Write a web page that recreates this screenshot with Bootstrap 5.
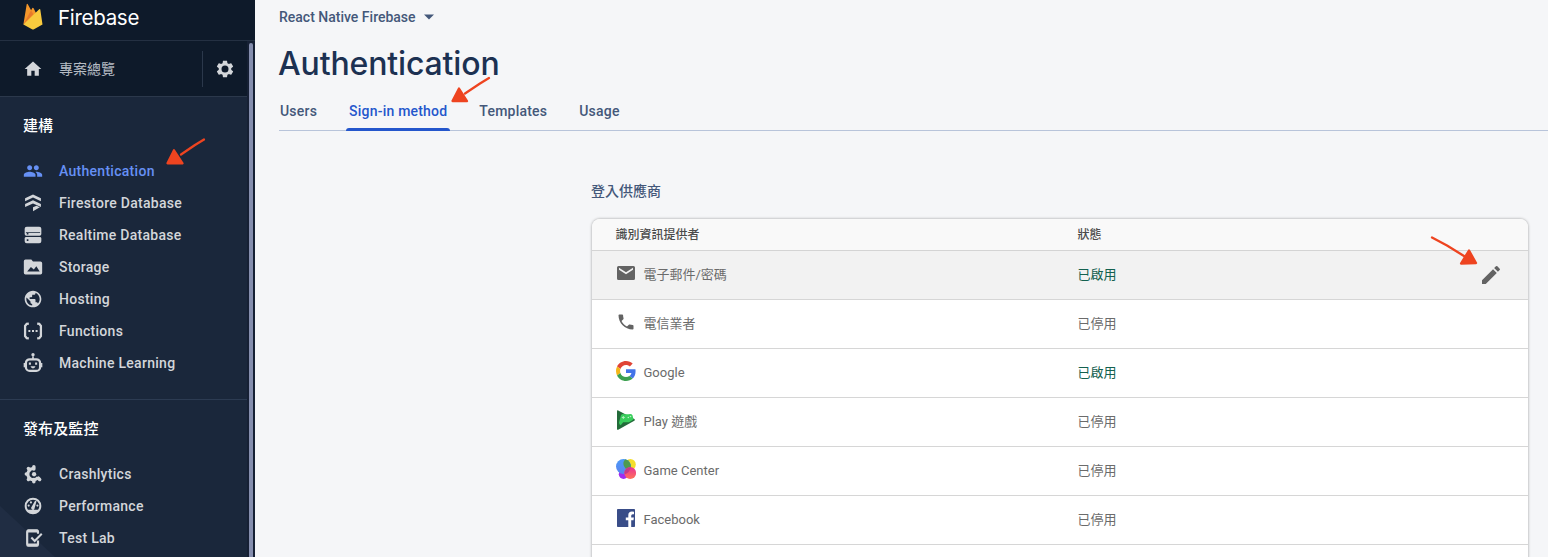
<!DOCTYPE html>
<html lang="zh-Hant">
<head>
<meta charset="utf-8">
<meta name="viewport" content="width=device-width, initial-scale=1">
<title>Authentication - Firebase</title>
<link rel="stylesheet" href="https://cdn.jsdelivr.net/npm/bootstrap@5.3.0/dist/css/bootstrap.min.css">
<style>
body{font-family:Roboto,"Noto Sans CJK TC",sans-serif;font-size:14px;line-height:20px;background:#f5f6f8;color:#3d5077}
.sidebar{width:255px;background:#1a273b;color:#d3d6da}
.brand-bar{height:41px;background:#0e1a2a;border-bottom:1px solid #243042;padding:0 0 7px 23px}
.brand-name{font:400 20.5px/28px Inter,sans-serif;letter-spacing:-.3px;color:#fff;margin:2px 0 0 15px}
.overview{height:56px;width:247px;background:#0e1a2a;border-bottom:1px solid #2b384b;padding-left:23px;color:#b6bcc4}
.overview-gear{height:36px;width:45px;border-left:1px solid #2b384b}
.side-scroll{top:41px;right:0;width:8px;background:#162034}
.side-scroll span{width:4px;margin:2px 2px 0;background:#858eae;border-radius:3px 3px 0 0}
.side-section{width:247px;border-bottom:1px solid #2c3b52;padding:19px 0 20px 23px}
.side-title{font-size:15px;font-weight:500;letter-spacing:.1px;color:#fff;margin-bottom:19px;line-height:20px}
.side-link{height:32px;gap:16px;color:#d3d6da;font-weight:500;letter-spacing:.28px;text-decoration:none}
.side-link.active{color:#6690f4}
.ic{width:20px;height:20px;fill:currentColor;flex:none;display:block}
.corner{left:0;bottom:0}
.page{padding-left:24px}
.project{height:34px;font-weight:500;color:#44587a}
h1.page-title{font:500 32px/40px Inter,sans-serif;letter-spacing:-.15px;color:#1c3152;margin:10px 0 -1px -1px}
.tabs{gap:32px;height:48px;border-bottom:1px solid #b8c4da;padding-left:1px}
.tabs a{height:48px;line-height:57px;font-weight:500;letter-spacing:.21px;color:#44587a;text-decoration:none;position:relative}
.tabs a.active{color:#2456cc}
.tabs a.active::after{content:"";position:absolute;left:-3px;right:-3px;bottom:0;height:3px;background:#2456cc;border-radius:3px 3px 0 0}
.providers{width:936px;margin:50px 0 0 313px}
.providers h2{font-size:14px;line-height:20px;font-weight:500;color:#44587a;margin:0 0 18px -1px}
.provider-card{background:#fff;border-radius:8px 8px 0 0;box-shadow:0 0 3px rgba(0,0,0,.38);font-size:13px;color:#6b6b6b}
.p-head{height:32px;background:#f9f9f9;border-bottom:1px solid #d4d4d4;border-radius:8px 8px 0 0;font-size:12px;font-weight:500;color:#4b4b4b;padding:0 24px 0 23.5px}
.p-row{height:49px;border-bottom:1px solid #d6d6d6;padding:0 25px 0 23.5px}
.p-row.hovered{background:#f2f2f2}
.p-name{width:462px}
.p-row .ic{margin-right:8px;margin-top:-4px;color:#636363}
.p-row .edit{width:24px;height:24px;margin:0 0 0 auto}
.enabled{color:#14614f}
.arrows{left:0;top:0;pointer-events:none}
</style>
</head>
<body>
<div class="d-flex vh-100 overflow-hidden position-relative">
<aside class="sidebar position-relative flex-shrink-0 overflow-hidden">
  <div class="brand-bar d-flex align-items-center">
    <svg width="20" height="27" viewBox="0 0 20 27"><path fill="#f5972b" d="M.4 21.5 3.700 1.300Q4.100.2 4.800 1.200L8.100 7.300 9.300 5Q10 4.200 10.600 5.200L14 12 .4 21.500z"/><path fill="#e7792b" d="M.4 21.500 10.300 11.300 8.100 7.300z"/><path fill="#f8ca3e" d="M.4 21.500 16.200 6.200Q17 5.500 17.300 6.600L19.500 21.500 11 26.200Q10 26.800 9 26.200z"/></svg>
    <span class="brand-name">Firebase</span>
  </div>
  <div class="overview d-flex align-items-center">
    <svg class="ic" style="color:#d3d6da" viewBox="0 0 24 24"><path d="M10 20v-6h4v6h5v-8h3L12 3 2 12h3v8z"/></svg>
    <span class="ms-3 flex-grow-1">專案總覽</span>
    <div class="overview-gear d-flex align-items-center justify-content-center"><svg class="ic" style="color:#d3d6da" viewBox="0 0 24 24"><path fill-rule="evenodd" d="M19.43 12.98c.04-.32.07-.64.07-.98s-.03-.66-.07-.98l2.11-1.65c.19-.15.24-.42.12-.64l-2-3.46c-.12-.22-.39-.3-.61-.22l-2.49 1c-.52-.4-1.08-.73-1.69-.98l-.38-2.65C14.46 2.18 14.25 2 14 2h-4c-.25 0-.46.18-.49.42l-.38 2.65c-.61.25-1.17.59-1.69.98l-2.49-1c-.23-.09-.49 0-.61.22l-2 3.46c-.13.22-.07.49.12.64l2.11 1.65c-.04.32-.07.65-.07.98s.03.66.07.98l-2.11 1.65c-.19.15-.24.42-.12.64l2 3.46c.12.22.39.3.61.22l2.49-1c.52.4 1.08.73 1.69.98l.38 2.65c.03.24.24.42.49.42h4c.25 0 .46-.18.49-.42l.38-2.65c.61-.25 1.17-.59 1.69-.98l2.49 1c.23.09.49 0 .61-.22l2-3.46c.12-.22.07-.49-.12-.64zM12 16.2a4.2 4.2 0 1 1 0-8.4 4.2 4.2 0 0 1 0 8.4z"/></svg></div>
  </div>
  <svg class="corner position-absolute" width="60" height="52" viewBox="0 0 60 52"><path fill="#202d43" d="M0 1 55 52H0z"/></svg>
  <nav class="side-section position-relative">
    <div class="side-title">建構</div>
    <a class="side-link active d-flex align-items-center" href="#"><svg class="ic" viewBox="0 0 24 24"><path d="M16 11c1.66 0 2.99-1.34 2.99-3S17.66 5 16 5s-3 1.34-3 3 1.34 3 3 3zm-8 0c1.66 0 2.99-1.34 2.99-3S9.66 5 8 5 5 6.34 5 8s1.34 3 3 3zm0 2c-2.330 0-7 1.170-7 3.500V19h14v-2.500c0-2.330-4.670-3.500-7-3.500zm8 0c-.29 0-.62.02-.97.05 1.160.84 1.970 1.970 1.970 3.450V19h6v-2.500c0-2.330-4.670-3.500-7-3.500z"/></svg>Authentication</a>
    <a class="side-link d-flex align-items-center" href="#"><svg class="ic" viewBox="0 0 24 24"><path d="M12 1.700 21.500 6.300V10L12 5.500 2.500 10V6.300zM12 8.700l9.500 4.500v3.700L12 12.500 2.500 16.900v-3.700zM12 17.200l4.200-1.900 4 1.900-8.200 4.800z"/></svg>Firestore Database</a>
    <a class="side-link d-flex align-items-center" href="#"><svg class="ic" viewBox="0 0 24 24"><path fill-rule="evenodd" d="M4.500 2h15Q22 2 22 4.500v6.300q0 2-2 2H4q-2 0-2-2V4.500Q2 2 4.500 2zM3.500 8.600v1.100h1v1.800h2V9.700h14V8.600zM4 14.500h16q2 0 2 1.500v3.500q0 2.500-2.500 2.500h-15Q2 22 2 19.500V16q0-1.500 2-1.500zm.5 2.700v2h2v-2z"/></svg>Realtime Database</a>
    <a class="side-link d-flex align-items-center" href="#"><svg class="ic" viewBox="0 0 24 24"><path fill-rule="evenodd" d="M3 3h7l2 2.500h9q2 0 2 2V19q0 2-2 2H3q-2 0-2-2V5q0-2 2-2zm2 14.500h15l-4-6.500-3 4-3.500-3z"/></svg>Storage</a>
    <a class="side-link d-flex align-items-center" href="#"><svg class="ic" viewBox="0 0 24 24"><path d="M12 2C6.480 2 2 6.480 2 12s4.480 10 10 10 10-4.480 10-10S17.520 2 12 2zm-1 17.930c-3.950-.49-7-3.850-7-7.930 0-.62.080-1.210.210-1.790L9 15v1c0 1.100.9 2 2 2v1.930zm6.900-2.540c-.26-.81-1-1.390-1.900-1.390h-1v-3c0-.55-.45-1-1-1H8v-2h2c.55 0 1-.45 1-1V7h2c1.100 0 2-.9 2-2v-.41c2.930 1.190 5 4.060 5 7.410 0 2.080-.8 3.970-2.100 5.390z"/></svg>Hosting</a>
    <a class="side-link d-flex align-items-center" href="#"><svg class="ic" viewBox="0 0 24 24"><path fill="none" stroke="currentColor" stroke-width="2.700" d="M7 3.200 4.500 3.500 2.500 6v12l2 2.500 2.500.3M17 3.200l2.500.3 2 2.500v12l-2 2.500-2.500.3"/><path d="M6.500 10.800h2.300v2.400H6.500zm4.300 0h2.400v2.400h-2.400zm4.300 0h2.400v2.400h-2.400z"/></svg>Functions</a>
    <a class="side-link d-flex align-items-center" href="#"><svg class="ic" viewBox="0 0 24 24"><rect x="3.500" y="7.500" width="17" height="14" rx="4.500" fill="none" stroke="currentColor" stroke-width="2.700"/><path d="M11 4h2v4h-2zM.8 12H3v5H.8zM21 12h2.200v5H21zM7 11.500h2.500V14H7zm7.500 0H17V14h-2.500zM9 16h6q-.7 2.500-3 2.500T9 16z"/><circle cx="12" cy="2" r="2"/></svg>Machine Learning</a>
  </nav>
  <nav class="side-section position-relative">
    <div class="side-title">發布及監控</div>
    <a class="side-link d-flex align-items-center" href="#"><svg class="ic" viewBox="0 0 24 24"><path fill="none" stroke="currentColor" stroke-width="3.600" d="M12.500 5.500A6.700 6.700 0 1 0 18 16"/><g stroke="currentColor" stroke-width="4.200" stroke-linecap="round"><path d="M13 6V3.300M8 7 6.500 5.500M5.500 12H4M7.500 17.500l-1 1M13 18.500v2.700M18.500 17l1.500 1.500"/></g><circle cx="13.300" cy="12.300" r="2.600"/></svg>Crashlytics</a>
    <a class="side-link d-flex align-items-center" href="#"><svg class="ic" viewBox="0 0 24 24"><circle cx="12" cy="12" r="8.800" fill="none" stroke="currentColor" stroke-width="2.400"/><path d="M5 16.500h14Q16.500 21 12 21t-7-4.500zM14.500 5.800l1.700.6-2.200 8a2.100 2.100 0 1 1-3.600-1.500z"/><circle cx="6.800" cy="11.500" r="1.300"/><circle cx="9.500" cy="7.700" r="1.300"/><circle cx="17.300" cy="11.500" r="1.300"/></svg>Performance</a>
    <a class="side-link d-flex align-items-center" href="#"><svg class="ic" viewBox="0 0 24 24"><path fill="none" stroke="currentColor" stroke-width="2.600" d="M18 7V4.500Q18 2.800 16.500 2.800H6.500Q5 2.800 5 4.500v15Q5 21.200 6.500 21.200h10q1.500 0 1.500-1.700V15"/><path d="M5 2h13v3.500H5zM5 18.500h13V22H5z"/><path fill="none" stroke="currentColor" stroke-width="2.500" d="m10 11.500 4 4 8.500-8.500"/></svg>Test Lab</a>
  </nav>
  <div class="side-scroll position-absolute bottom-0 d-flex"><span></span></div>
</aside>
<main class="page flex-grow-1">
  <div class="project d-flex align-items-center">React Native Firebase<svg class="ms-2" width="10" height="6" viewBox="0 0 10 6"><path fill="#44587a" d="M0 .5h10l-5 5z"/></svg></div>
  <h1 class="page-title">Authentication</h1>
  <nav class="tabs d-flex">
    <a href="#">Users</a><a class="active" href="#">Sign-in method</a><a href="#">Templates</a><a href="#">Usage</a>
  </nav>
  <section class="providers">
    <h2>登入供應商</h2>
    <div class="provider-card">
      <div class="p-head d-flex align-items-center"><span class="p-name">識別資訊提供者</span><span>狀態</span></div>
      <div class="p-row hovered d-flex align-items-center"><div class="p-name d-flex align-items-center"><svg class="ic" viewBox="0 0 20 20"><path fill-rule="evenodd" d="M2.500 3h15q1.500 0 1.500 1.500v11q0 1.500-1.500 1.500h-15Q1 17 1 15.500v-11Q1 3 2.500 3zM3 4.800v2l7 4.400 7-4.400v-2L10 9.200z"/></svg>電子郵件/密碼</div><span class="enabled">已啟用</span><svg class="ic edit" viewBox="0 0 24 24"><path d="M3 17.250V21h3.750L17.810 9.940l-3.750-3.750zM20.710 7.040a1 1 0 0 0 0-1.410l-2.340-2.340a1 1 0 0 0-1.410 0l-1.830 1.830 3.750 3.750z"/></svg></div>
      <div class="p-row d-flex align-items-center"><div class="p-name d-flex align-items-center"><svg class="ic" viewBox="0 0 24 24"><path d="M6.620 10.790c1.440 2.830 3.760 5.140 6.590 6.590l2.200-2.200c.27-.27.67-.36 1.020-.24 1.120.37 2.330.57 3.570.57.55 0 1 .45 1 1V20c0 .55-.45 1-1 1-9.390 0-17-7.610-17-17 0-.55.45-1 1-1h3.500c.55 0 1 .45 1 1 0 1.250.2 2.450.57 3.570.11.35.03.74-.25 1.020z"/></svg>電信業者</div><span>已停用</span></div>
      <div class="p-row d-flex align-items-center"><div class="p-name d-flex align-items-center"><svg class="ic" viewBox="0 0 48 48"><path fill="#e04436" d="M24 9.500c3.540 0 6.710 1.220 9.210 3.600l6.850-6.850C35.900 2.380 30.470 0 24 0 14.620 0 6.510 5.380 2.560 13.220l7.980 6.190C12.430 13.720 17.740 9.500 24 9.500z"/><path fill="#4374e8" d="M46.980 24.550c0-1.570-.15-3.090-.38-4.550H24v9.020h12.940c-.58 2.960-2.260 5.480-4.780 7.180l7.730 6c4.510-4.180 7.090-10.360 7.090-17.650z"/><path fill="#f4b619" d="M10.530 28.590A14.500 14.500 0 0 1 9.770 24c0-1.600.27-3.140.76-4.590l-7.980-6.190A24 24 0 0 0 0 24c0 3.880.92 7.540 2.560 10.780z"/><path fill="#3ba04f" d="M24 48c6.480 0 11.930-2.130 15.890-5.810l-7.730-6c-2.150 1.450-4.920 2.300-8.160 2.300-6.260 0-11.570-4.220-13.470-9.910l-7.980 6.190C6.510 42.620 14.620 48 24 48z"/></svg>Google</div><span class="enabled">已啟用</span></div>
      <div class="p-row d-flex align-items-center"><div class="p-name d-flex align-items-center"><svg class="ic" viewBox="0 0 20 20"><path fill="#236b3a" d="M1 1.200Q1 0 2.200.5L18.300 9q1.200.8 0 1.700L2.200 19.700Q1 20.200 1 19z"/><path fill="#39ce5c" d="M5 5.300q1-1.500 3-1.100h4.500q3-.8 4 1l1 4.300-4.500 2.700H7.200l-2.500 3Q3 14.800 3 12.500z"/><path stroke="#b8efc4" stroke-width=".9" d="M7.300 6v3M5.800 7.500h3"/><circle cx="12.300" cy="7.500" r=".8" fill="#b8efc4"/><circle cx="14.500" cy="6.500" r=".8" fill="#b8efc4"/></svg>Play 遊戲</div><span>已停用</span></div>
      <div class="p-row d-flex align-items-center"><div class="p-name d-flex align-items-center"><svg class="ic" viewBox="0 0 20 20"><defs><linearGradient id="gb" x2="0" y2="1"><stop stop-color="#4b9af8"/><stop offset="1" stop-color="#5c83ee"/></linearGradient><linearGradient id="gp" x2="0" y2="1"><stop stop-color="#e93298"/><stop offset="1" stop-color="#ff7358"/></linearGradient></defs><circle cx="14.300" cy="5.500" r="5.500" fill="#f4de2d"/><circle cx="7.500" cy="15.300" r="4.700" fill="#a12df0"/><circle cx="7.500" cy="7.500" r="7.500" fill="url(#gb)"/><path fill="#4d9a50" d="M9 .2A7.500 7.500 0 0 1 14.800 9Q12 11 9.500 9.500 5.500 5 9 .2z"/><circle cx="14.200" cy="14" r="5.900" fill="url(#gp)"/><path fill="#c63a87" d="M8.300 14Q9 8.600 14.700 8.300 13.500 14 9 15.200z"/></svg>Game Center</div><span>已停用</span></div>
      <div class="p-row d-flex align-items-center"><div class="p-name d-flex align-items-center"><svg class="ic" viewBox="0 0 20 20"><rect x="1" y="1" width="18" height="18" rx=".8" fill="#394d88"/><path fill="#fff" d="M12.300 19v-6.700H9.800V9.500h2.500V7.300q0-3.700 3.700-3.700 1 0 2 .2v2.500h-1.300q-1.500 0-1.500 1.500v1.700h2.700l-.4 2.800h-2.300V19z"/></svg>Facebook</div><span>已停用</span></div>
      <div class="p-row"></div>
    </div>
  </section>
</main>
<!-- Hand-drawn pointers laid over the page -->
<svg class="arrows position-absolute" width="1548" height="557" fill="#ee4420" stroke="#ee4420" stroke-width="2.300" stroke-linecap="round" stroke-linejoin="round">
  <path d="m204 139.500-9 5.500-14 9.500"/><path d="m167.500 163.300 6.500-13 8.500 13z"/>
  <path d="m489 78-9 5.500-15 10"/><path d="m452.500 101 6.500-12.500 8 12.500z"/>
  <path d="m1432 237.500 15 8 17 10.500"/><path d="m1461 263.500 8-13 7 12.500z"/>
</svg>
</div>
<script src="https://cdn.jsdelivr.net/npm/bootstrap@5.3.0/dist/js/bootstrap.bundle.min.js"></script>
</body>
</html>
